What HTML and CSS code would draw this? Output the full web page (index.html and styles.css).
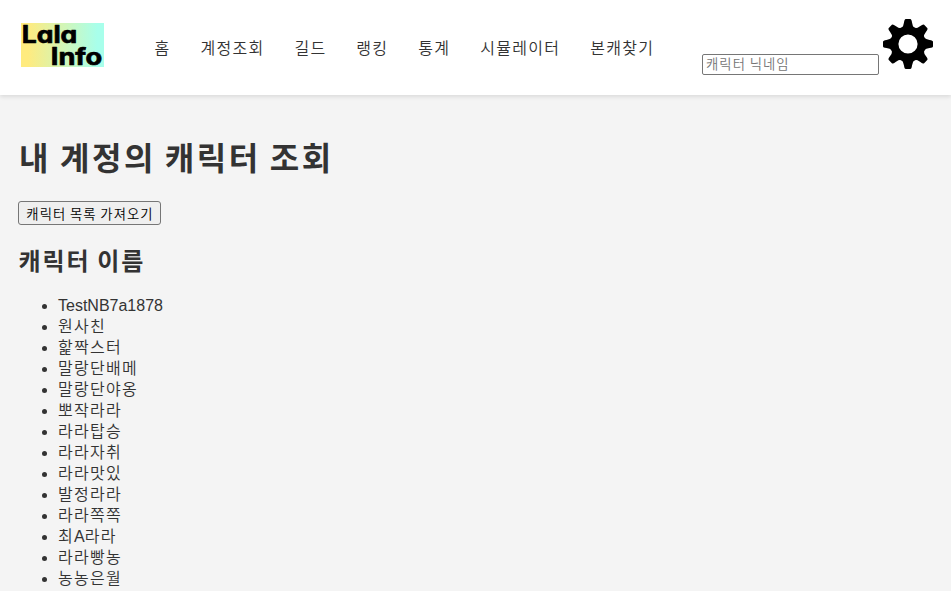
FILE: index.html
```html
<!DOCTYPE html>
<html lang="ko">
<head>
    <meta charset="UTF-8">
    <title>Lala Info</title>
    <link rel="stylesheet" href="styles.css">
</head>
<body>
    <header class="header">
        <a class="logo" href="#">
            <svg width="83" height="44" viewBox="0 0 83 44">
                <text x="0.8" y="20.2" textLength="55.5" lengthAdjust="spacingAndGlyphs">Lala</text>
                <text x="29.8" y="42.4" textLength="51.5" lengthAdjust="spacingAndGlyphs">Info</text>
            </svg>
        </a>
        <nav class="menu">
            <a href="#">홈</a>
            <a href="#">계정조회</a>
            <a href="#">길드</a>
            <a href="#">랭킹</a>
            <a href="#">통계</a>
            <a href="#">시뮬레이터</a>
            <a href="#">본캐찾기</a>
        </nav>
        <div class="search">
            <input type="text" class="search-input" placeholder="캐릭터 닉네임">
            <svg class="gear" width="50" height="50" viewBox="-25 -25 50 50">
                <defs>
                    <path id="tooth" d="M-6.4 -16 Q-4.4 -18 -4 -21.5 Q-3.6 -25 -2.2 -25 H2.2 Q3.6 -25 4 -21.5 Q4.4 -18 6.4 -16 Z"/>
                </defs>
                <use href="#tooth"/>
                <use href="#tooth" transform="rotate(45)"/>
                <use href="#tooth" transform="rotate(90)"/>
                <use href="#tooth" transform="rotate(135)"/>
                <use href="#tooth" transform="rotate(180)"/>
                <use href="#tooth" transform="rotate(225)"/>
                <use href="#tooth" transform="rotate(270)"/>
                <use href="#tooth" transform="rotate(315)"/>
                <circle r="13.7" fill="none" stroke="#000" stroke-width="8.2"/>
            </svg>
        </div>
    </header>
    <main class="content">
        <h1>내 계정의 캐릭터 조회</h1>
        <button class="load-btn" type="button">캐릭터 목록 가져오기</button>
        <h2>캐릭터 이름</h2>
        <ul class="names">
            <li class="latin">TestNB7a1878</li>
            <li>원사친</li>
            <li>핥짝스터</li>
            <li>말랑단배메</li>
            <li>말랑단야옹</li>
            <li>뽀작라라</li>
            <li>라라탑승</li>
            <li>라라자취</li>
            <li>라라맛있</li>
            <li>발정라라</li>
            <li>라라쪽쪽</li>
            <li>최<span class="latin">A</span>라라</li>
            <li>라라빵농</li>
            <li>농농은월</li>
        </ul>
    </main>
</body>
</html>
```
FILE: styles.css
```css
html, body {
    height: 100%;
    margin: 0;
    padding: 0;
}
body {
    font-family: "Liberation Sans", "Noto Sans CJK KR", sans-serif;
    font-weight: 350;
    color: #333;
    background-color: #f4f4f4;
    letter-spacing: 0.08em;
    word-spacing: -0.08em;
    overflow: hidden;
}
.header {
    display: flex;
    align-items: center;
    box-sizing: border-box;
    height: 95px;
    padding: 0 18px 0 21px;
    background-color: #fff;
    box-shadow: 0 2px 4px rgba(0,0,0,0.1);
}
.logo {
    height: 44px;
    margin-top: -5px;
    background: linear-gradient(to right, #ffeb7f 8%, #a8ffeb 92%);
}
.logo svg {
    display: block;
    overflow: visible;
}
.logo text {
    font-family: Inter, sans-serif;
    font-size: 24px;
    font-weight: 700;
    font-feature-settings: "cv11";
    letter-spacing: 0;
    word-spacing: 0;
    fill: #000;
    stroke: #000;
    stroke-width: 0.7;
    stroke-linejoin: round;
}
.menu {
    display: flex;
    gap: 31.2px;
    margin-left: 50.5px;
    padding-top: 2px;
}
.menu a {
    color: #333;
    text-decoration: none;
    line-height: 20px;
    margin-right: -0.08em;
}
.search {
    display: flex;
    align-items: flex-end;
    gap: 4px;
    height: 56px;
    margin-top: -1px;
    margin-left: auto;
}
.search-input {
    box-sizing: border-box;
    width: 177px;
    height: 21px;
    padding: 1px 2px 1px 3px;
    border: 1px solid #767676;
    border-radius: 2px;
    font: 350 13.333px "Liberation Sans", "Noto Sans CJK KR", sans-serif;
    letter-spacing: 0.08em;
    word-spacing: -0.08em;
}
.search-input::placeholder {
    color: #757575;
}
.gear {
    align-self: flex-start;
}
.content {
    padding: 0 18px;
}
h1, h2 {
    letter-spacing: 0.08em;
    word-spacing: -0.08em;
}
h1 {
    margin: 0;
    padding: 42px 0 0 1px;
    font-size: 32px;
    line-height: 44px;
}
.load-btn {
    display: block;
    box-sizing: border-box;
    width: 143px;
    height: 24px;
    margin-top: 20px;
    padding: 0 0 0 1px;
    border: 1px solid #767676;
    border-radius: 3px;
    background-color: #efefef;
    color: #000;
    font: 350 13.333px "Liberation Sans", "Noto Sans CJK KR", sans-serif;
    letter-spacing: 0.08em;
    word-spacing: -0.08em;
}
h2 {
    margin: 21px 0 17px;
    padding-left: 0.5px;
    font-size: 24px;
    line-height: 32px;
}
.names {
    margin: 0;
    padding-left: 40px;
}
.names li {
    line-height: 21px;
}
.latin {
    letter-spacing: 0;
}
```
